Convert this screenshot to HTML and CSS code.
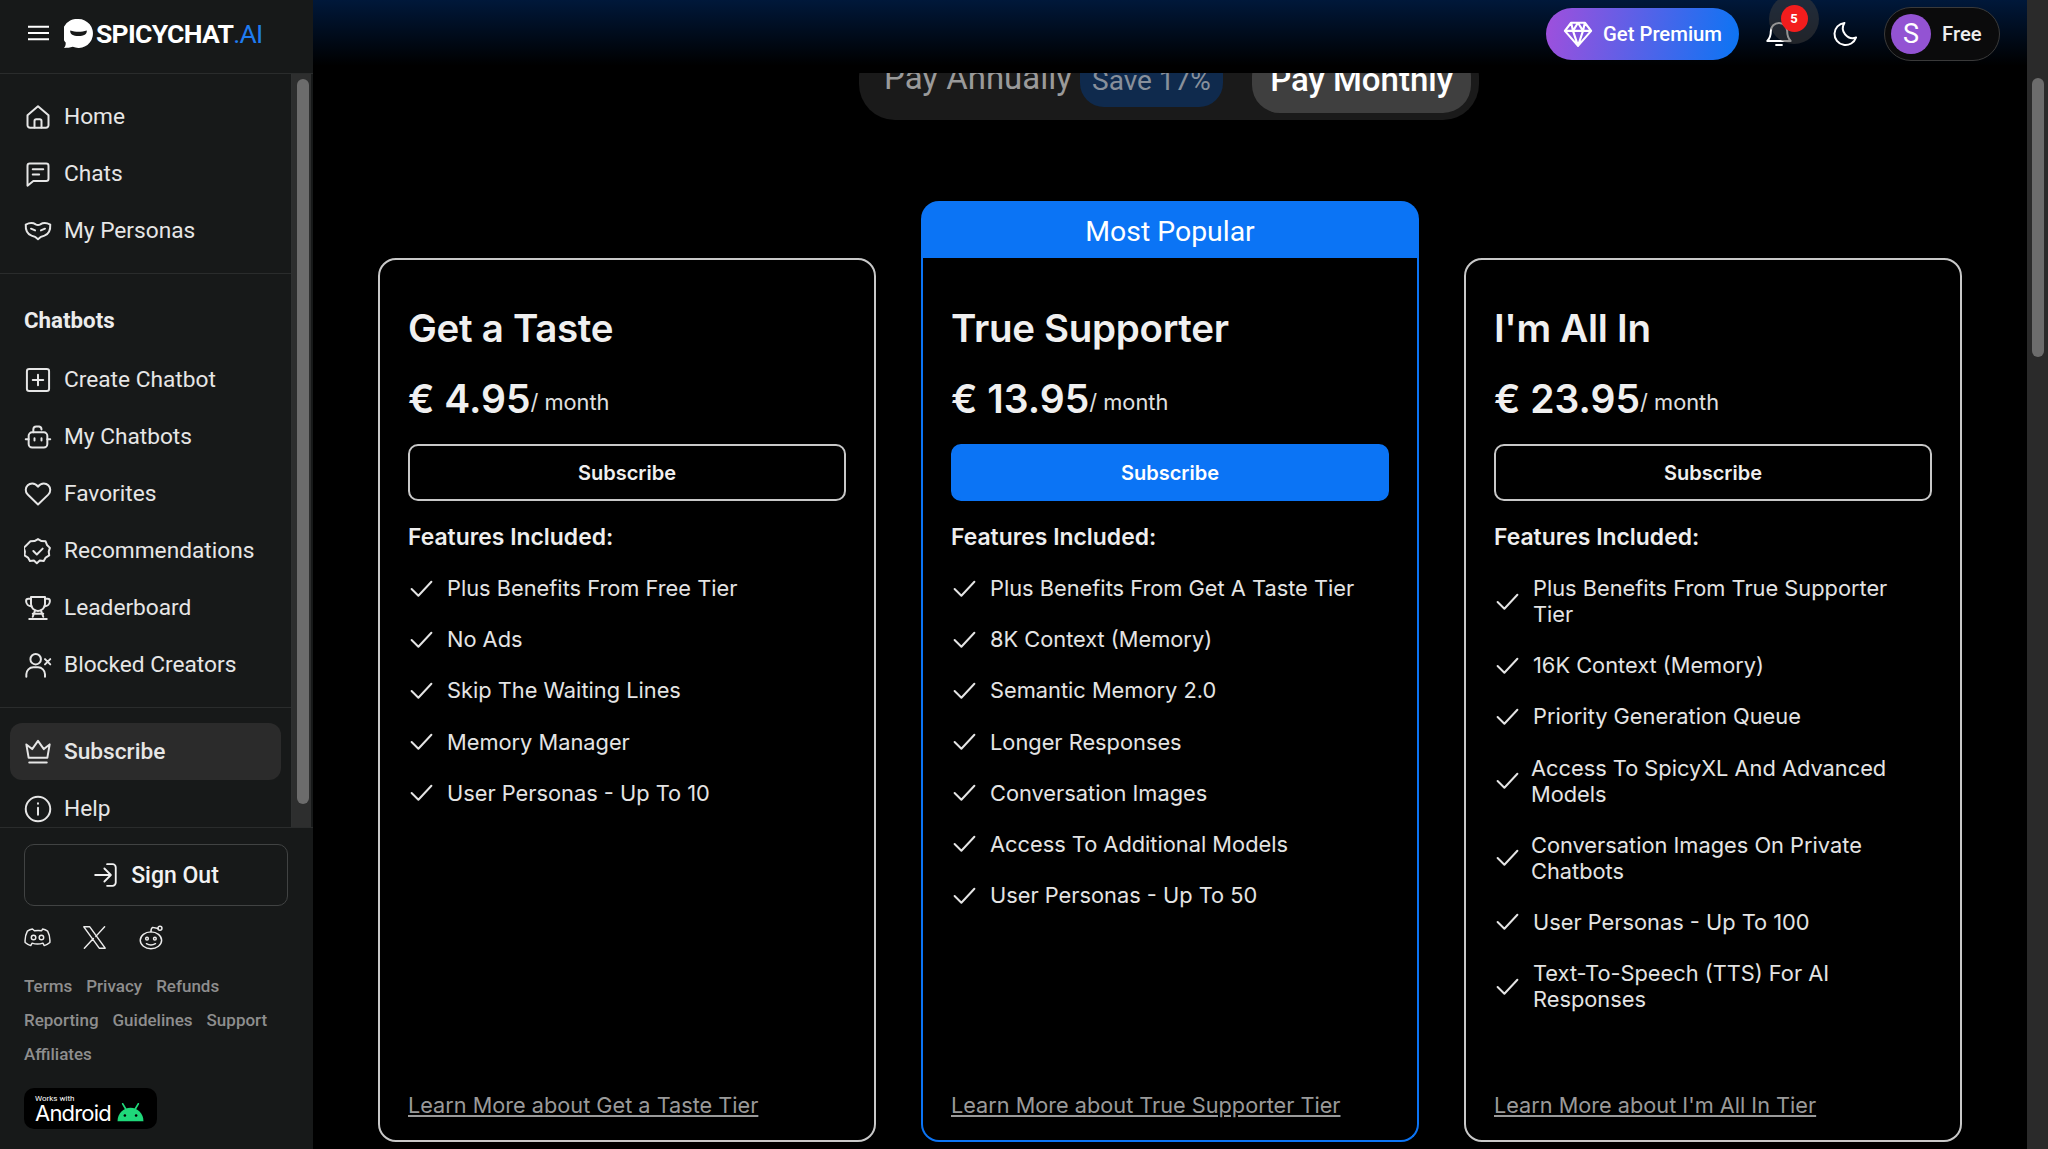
FILE: index.html
```html
<!DOCTYPE html>
<html>
<head>
	<meta charset="utf-8">
	<title>SpicyChat.AI - Subscribe</title>
	<link rel="stylesheet" href="styles.css">
</head>

<body>
	<svg class="sprite" xmlns="http://www.w3.org/2000/svg">
		<symbol id="i-home" viewBox="0 0 24 24"><path d="M3 10.500 12 2.800l9 7.700V19a2.200 2.200 0 0 1-2.200 2.200H5.200A2.200 2.200 0 0 1 3 19z"/><path d="M9 21v-5.500a1.500 1.500 0 0 1 1.500-1.500h3a1.500 1.500 0 0 1 1.500 1.500V21"/></symbol>
		<symbol id="i-chat" viewBox="0 0 24 24"><path d="M3 5a2 2 0 0 1 2-2h14a2 2 0 0 1 2 2v11a2 2 0 0 1-2 2H8l-5 4z"/><path d="M7.500 8h9M7.500 12.500h5.500"/></symbol>
		<symbol id="i-mask" viewBox="0 0 24 24"><path d="M1.500 6.500c3.500-1.800 6.500-1.500 8.500-.2 1.200.7 2.800.7 4 0 2-1.300 5-1.600 8.500.2.300 5-1 8-5 9.500-1.500.5-2.500.7-3.200 1.200L12 19l-2.300-1.800c-.7-.5-1.700-.7-3.200-1.200-4-1.500-5.300-4.500-5-9.500z"/><path d="M6 10l3.500 1.500M18 10l-3.500 1.500"/></symbol>
		<symbol id="i-plus" viewBox="0 0 24 24"><rect x="2.500" y="2.500" width="19" height="19" rx="2"/><path d="M12 7.500v9M7.500 12h9"/></symbol>
		<symbol id="i-bot" viewBox="0 0 24 24"><rect x="4" y="8" width="16" height="13" rx="3"/><path d="M8 8V5.500A2.500 2.500 0 0 1 10.500 3H13a2.500 2.500 0 0 1 2 2.500M1.500 14H4M20 14h2.500M9 13v2M15 13v2"/></symbol>
		<symbol id="i-heart" viewBox="0 0 24 24"><path d="M12 21 3.200 12.500A5.800 5.800 0 0 1 1.500 8.300 5.600 5.600 0 0 1 7 3c2 0 3.800 1 5 2.800C13.200 4 15 3 17 3a5.600 5.600 0 0 1 5.500 5.300 5.800 5.800 0 0 1-1.700 4.200z"/></symbol>
		<symbol id="i-badge" viewBox="0 0 24 24"><path d="M12 1.800l3 1.700 3.500.2 1.200 3.100 2.500 2.500-1 3.200.4 3.300-3 1.800-1.700 3-3.400-.4-2.500 2.200-2.500-2.200-3.400.4-1.700-3-3-1.800.4-3.300-1-3.200 2.500-2.500L5.500 3.700 9 3.500z"/><path d="M8 12l3 3 5-5"/></symbol>
		<symbol id="i-trophy" viewBox="0 0 24 24"><path d="M6 2.500h12v6a6 6 0 0 1-12 0z"/><path d="M6 4H3.800a2 2 0 0 0-2 2c0 2.500 2 4.500 4.700 4.500M18 4h2.200a2 2 0 0 1 2 2c0 2.500-2 4.500-4.700 4.500M9.500 14l-2 5.500M14.500 14l2 5.500M7.500 17h9M4.500 21.500h15"/></symbol>
		<symbol id="i-userx" viewBox="0 0 24 24"><circle cx="10" cy="7" r="4.500"/><path d="M2 22v-2a6 6 0 0 1 6-6h4a6 6 0 0 1 6 6v2M18 7l4.500 4.500M22.500 7 18 11.500"/></symbol>
		<symbol id="i-crown" viewBox="0 0 24 24"><path d="M2 5.500l5 4 5-7 5 7 5-4-2 11.500H4zM4.500 21h15"/></symbol>
		<symbol id="i-info" viewBox="0 0 24 24"><circle cx="12" cy="12" r="10.500"/><path d="M12 11v6M12 7v.6"/></symbol>
		<symbol id="i-signin" viewBox="0 0 24 24"><path d="M13 2h5a3 3 0 0 1 3 3v14a3 3 0 0 1-3 3h-5M2 12h14M10.500 6l6 6-6 6"/></symbol>
		<symbol id="i-discord" viewBox="0 0 24 24"><path d="M7.500 4.500c-2 .3-3.300 1-4.500 1.800C1.300 9.500.7 13 1 16.500c1.500 1.300 3 2.200 5 2.700l1.200-2.200c3 1 6.600 1 9.600 0l1.200 2.200c2-.5 3.500-1.400 5-2.700.3-3.500-.3-7-2-10.200-1.200-.8-2.500-1.500-4.500-1.800l-.8 1.500c-2.200-.3-4.200-.3-6.400 0z"/><circle cx="8.500" cy="12" r="2"/><circle cx="15.500" cy="12" r="2"/></symbol>
		<symbol id="i-x" viewBox="0 0 24 24"><path d="M2.500 2.500h5.300l13.700 19h-5.300zM21 2.500l-7.800 8.500M3 21.500l8-8.600"/></symbol>
		<symbol id="i-reddit" viewBox="0 0 24 24"><ellipse cx="11.500" cy="14.500" rx="9.500" ry="7.500"/><path d="M11.500 7c0-2 .5-3.500 1.500-4l5 1"/><circle cx="19.500" cy="3.800" r="1.800"/><circle cx="8" cy="13" r="1.200"/><circle cx="15" cy="13" r="1.200"/><path d="M7.500 17.500c2.500 1.500 5.500 1.500 8 0"/></symbol>
		<symbol id="i-check" viewBox="0 0 24 24"><path d="M2.500 12.500 9 19 21.500 5.500"/></symbol>
		<symbol id="i-diamond" viewBox="0 0 24 24"><path d="M6.500 3h11L22.500 9.500 12 21.500 1.500 9.500zM1.500 9.500h21M8 9.500 12 21.500l4-12M6.500 3 8 9.500 12 3l4 6.500L17.500 3"/></symbol>
		<symbol id="i-bell" viewBox="0 0 24 24"><path d="M12 2.500a7 7 0 0 0-7 7c0 5-1 6.500-3 8.500h20c-2-2-3-3.500-3-8.500a7 7 0 0 0-7-7zM9.500 21.500h5"/></symbol>
		<symbol id="i-moon" viewBox="0 0 24 24"><path d="M11.500 2.500a9.500 9.500 0 1 0 10 12.500 8.500 8.500 0 0 1-10-12.500z"/></symbol>
	</svg>

	<aside class="sidebar">
		<div class="brand">
			<svg class="burger" viewBox="0 0 22 16"><path d="M0 1.500h22M0 8h22M0 14.500h22"/></svg>
			<svg class="logo-mark" viewBox="0 0 28 28"><path d="M14 0a14 14 0 1 1-5.500 26.900C6 27.800 3 28 0 28c1.200-1.400 1.800-3 1.600-5.200A14 14 0 0 1 14 0z" fill="#fff"/><path d="M6 11c5 1.800 11 1.800 16 0 .4 3.500-3 5.500-8 5.500S5.600 14.500 6 11z" fill="#171919"/></svg>
			<span class="logo-text">SPICYCHAT<span class="logo-ai">.AI</span></span>
		</div>

		<div class="side-scroll">
			<nav class="side-nav">
				<div class="side-group">
					<a class="side-link"><svg class="icon"><use href="#i-home"/></svg>Home</a>
					<a class="side-link"><svg class="icon"><use href="#i-chat"/></svg>Chats</a>
					<a class="side-link"><svg class="icon"><use href="#i-mask"/></svg>My Personas</a>
				</div>
				<div class="side-group">
					<h4 class="side-title">Chatbots</h4>
					<a class="side-link"><svg class="icon"><use href="#i-plus"/></svg>Create Chatbot</a>
					<a class="side-link"><svg class="icon"><use href="#i-bot"/></svg>My Chatbots</a>
					<a class="side-link"><svg class="icon"><use href="#i-heart"/></svg>Favorites</a>
					<a class="side-link"><svg class="icon"><use href="#i-badge"/></svg>Recommendations</a>
					<a class="side-link"><svg class="icon"><use href="#i-trophy"/></svg>Leaderboard</a>
					<a class="side-link"><svg class="icon"><use href="#i-userx"/></svg>Blocked Creators</a>
				</div>
				<div class="side-group last">
					<a class="side-link active"><svg class="icon"><use href="#i-crown"/></svg>Subscribe</a>
					<a class="side-link"><svg class="icon"><use href="#i-info"/></svg>Help</a>
				</div>
			</nav>
			<div class="side-track"><div class="side-thumb"></div></div>
		</div>

		<div class="side-foot">
			<button class="signout"><svg class="icon"><use href="#i-signin"/></svg>Sign Out</button>
			<div class="socials">
				<svg class="icon thin"><use href="#i-discord"/></svg>
				<svg class="icon thin"><use href="#i-x"/></svg>
				<svg class="icon thin"><use href="#i-reddit"/></svg>
			</div>
			<div class="foot-links">
				<a>Terms</a><a>Privacy</a><a>Refunds</a>
				<a>Reporting</a><a>Guidelines</a><a>Support</a>
				<a>Affiliates</a>
			</div>
			<div class="android">
				<div class="android-text">
					<span class="works">Works with</span>
					<span class="android-name">Android</span>
				</div>
				<svg class="android-head" viewBox="0 0 32 22"><path d="M7 1l3.500 6M25 1l-3.500 6" stroke="#1fd87a" stroke-width="2" stroke-linecap="round"/><path d="M1 21C1 12 8 5.500 16 5.500S31 12 31 21z" fill="#1fd87a"/><circle cx="9.500" cy="14.500" r="1.500" fill="#000"/><circle cx="22.500" cy="14.500" r="1.500" fill="#000"/></svg>
			</div>
		</div>
	</aside>

	<main class="main">
		<header class="topbar">
			<button class="premium"><svg class="icon"><use href="#i-diamond"/></svg>Get Premium</button>
			<div class="bell">
				<svg class="icon"><use href="#i-bell"/></svg>
				<span class="halo"><span class="badge">5</span></span>
			</div>
			<svg class="icon moon"><use href="#i-moon"/></svg>
			<div class="account"><span class="avatar">S</span>Free</div>
		</header>

		<div class="billing">
			<div class="billing-pill">
				<span class="bill-opt">Pay Annually</span>
				<span class="save">Save 17%</span>
				<span class="bill-opt current">Pay Monthly</span>
			</div>
		</div>

		<section class="plans">
			<article class="plan">
				<h2 class="plan-name">Get a Taste</h2>
				<p class="plan-price"><b>€ 4.95</b>/ month</p>
				<button class="plan-btn">Subscribe</button>
				<h3 class="plan-sub">Features Included:</h3>
				<ul class="feats">
					<li><svg class="icon"><use href="#i-check"/></svg>Plus Benefits From Free Tier</li>
					<li><svg class="icon"><use href="#i-check"/></svg>No Ads</li>
					<li><svg class="icon"><use href="#i-check"/></svg>Skip The Waiting Lines</li>
					<li><svg class="icon"><use href="#i-check"/></svg>Memory Manager</li>
					<li><svg class="icon"><use href="#i-check"/></svg>User Personas - Up To 10</li>
				</ul>
				<a class="plan-more">Learn More about Get a Taste Tier</a>
			</article>

			<article class="plan popular">
				<div class="popular-tag">Most Popular</div>
				<h2 class="plan-name">True Supporter</h2>
				<p class="plan-price"><b>€ 13.95</b>/ month</p>
				<button class="plan-btn">Subscribe</button>
				<h3 class="plan-sub">Features Included:</h3>
				<ul class="feats">
					<li><svg class="icon"><use href="#i-check"/></svg>Plus Benefits From Get A Taste Tier</li>
					<li><svg class="icon"><use href="#i-check"/></svg>8K Context (Memory)</li>
					<li><svg class="icon"><use href="#i-check"/></svg>Semantic Memory 2.0</li>
					<li><svg class="icon"><use href="#i-check"/></svg>Longer Responses</li>
					<li><svg class="icon"><use href="#i-check"/></svg>Conversation Images</li>
					<li><svg class="icon"><use href="#i-check"/></svg>Access To Additional Models</li>
					<li><svg class="icon"><use href="#i-check"/></svg>User Personas - Up To 50</li>
				</ul>
				<a class="plan-more">Learn More about True Supporter Tier</a>
			</article>

			<article class="plan">
				<h2 class="plan-name">I'm All In</h2>
				<p class="plan-price"><b>€ 23.95</b>/ month</p>
				<button class="plan-btn">Subscribe</button>
				<h3 class="plan-sub">Features Included:</h3>
				<ul class="feats">
					<li><svg class="icon"><use href="#i-check"/></svg>Plus Benefits From True Supporter Tier</li>
					<li><svg class="icon"><use href="#i-check"/></svg>16K Context (Memory)</li>
					<li><svg class="icon"><use href="#i-check"/></svg>Priority Generation Queue</li>
					<li class="tight"><svg class="icon"><use href="#i-check"/></svg>Access To SpicyXL And Advanced Models</li>
					<li class="tight"><svg class="icon"><use href="#i-check"/></svg>Conversation Images On Private Chatbots</li>
					<li><svg class="icon"><use href="#i-check"/></svg>User Personas - Up To 100</li>
					<li><svg class="icon"><use href="#i-check"/></svg>Text-To-Speech (TTS) For AI Responses</li>
				</ul>
				<a class="plan-more">Learn More about I'm All In Tier</a>
			</article>
		</section>
	</main>

	<div class="page-track"><div class="page-thumb"></div></div>
</body>
</html>
```

FILE: styles.css
```css
*{
	box-sizing: border-box;
}
html, body{
	height: 100%;
}
body{
	margin: 0;
	display: flex;
	height: 1149px;
	overflow: hidden;
	background-color: #000;
	color: #ececec;
	font-family: "Inter", "Liberation Sans", sans-serif;
}
h2, h3, h4, p, ul{
	margin: 0;
	padding: 0;
}
button{
	font-family: inherit;
	cursor: pointer;
}
.sprite{
	width: 0;
	height: 0;
	position: absolute;
}
.icon{
	fill: none;
	stroke: currentColor;
	stroke-width: 1.7;
	stroke-linecap: round;
	stroke-linejoin: round;
	flex-shrink: 0;
}

/* sidebar */
.sidebar{
	width: 313px;
	flex-shrink: 0;
	height: 100%;
	display: flex;
	flex-direction: column;
	background-color: #171919;
	font-family: "Roboto", "Liberation Sans", sans-serif;
}
.brand{
	height: 74px;
	flex-shrink: 0;
	display: flex;
	align-items: center;
	padding: 0 0 7px 28px;
	border-bottom: 1px solid #2a2c2c;
}
.burger{
	width: 21px;
	height: 16px;
	fill: none;
	stroke: #fff;
	stroke-width: 2.2;
	margin-right: 15px;
}
.logo-mark{
	width: 29px;
	height: 29px;
	margin-right: 3px;
}
.logo-text{
	font-size: 26.5px;
	font-weight: 700;
	letter-spacing: -0.7px;
	color: #fff;
}
.logo-ai{
	font-weight: 400;
	color: #1f7cf0;
}
.side-scroll{
	height: 754px;
	flex-shrink: 0;
	display: flex;
	border-bottom: 1px solid #2a2c2c;
	overflow: hidden;
}
.side-nav{
	width: 292px;
	flex-shrink: 0;
	border-right: 1px solid #2e3030;
}
.side-group{
	padding: 14px 0 14px;
	border-bottom: 1px solid #2a2c2c;
}
.side-group.last{
	border-bottom: 0;
	padding-top: 15px;
}
.side-title{
	font-size: 22.300px;
	font-weight: 700;
	color: #ececec;
	padding: 19px 24px 17px;
	line-height: 27px;
}
.side-link{
	display: flex;
	align-items: center;
	height: 57px;
	margin: 0 10px;
	padding-left: 14px;
	gap: 12px;
	font-size: 22.700px;
	color: #e6e6e6;
	border-radius: 12px;
}
.side-link .icon{
	width: 28px;
	height: 28px;
}
.side-link.active{
	background-color: #2b2b2b;
	font-weight: 500;
}
.side-track{
	width: 19px;
	background-color: #2d2e2e;
	padding: 5px 2px 0 5px;
}
.side-thumb{
	height: 725px;
	background-color: #6c6c6c;
	border-radius: 6px;
}
.side-foot{
	flex: 1;
	padding: 16px 24px 0;
}
.signout{
	width: 264px;
	height: 62px;
	display: flex;
	align-items: center;
	justify-content: center;
	gap: 12px;
	background-color: transparent;
	border: 1px solid #414343;
	border-radius: 10px;
	color: #f2f2f2;
	font-size: 23px;
	font-weight: 500;
}
.signout .icon{
	width: 26px;
	height: 26px;
}
.socials{
	display: flex;
	gap: 30px;
	margin-top: 18px;
	color: #ececec;
}
.socials .icon{
	width: 27px;
	height: 27px;
	stroke-width: 1.3;
}
.foot-links{
	display: flex;
	flex-wrap: wrap;
	column-gap: 14px;
	margin-top: 18px;
	width: 270px;
	font-size: 17px;
	font-weight: 500;
	line-height: 34px;
	color: #8e8e8e;
}
.android{
	width: 133px;
	height: 41px;
	margin-top: 17px;
	display: flex;
	align-items: flex-end;
	gap: 4px;
	padding: 0 10px 6px 11px;
	background-color: #000;
	border-radius: 10px;
	color: #fff;
}
.android-text{
	display: flex;
	flex-direction: column;
}
.works{
	font-size: 8px;
	line-height: 9px;
}
.android-name{
	font-family: "Inter", sans-serif;
	font-size: 22px;
	line-height: 20px;
	letter-spacing: -0.8px;
}
.android-head{
	width: 31px;
	height: 19px;
	margin-bottom: 1px;
}

/* main column */
.main{
	flex: 1;
	position: relative;
	min-width: 0;
	padding-top: 40px;
}
.topbar{
	position: absolute;
	top: 0;
	left: 0;
	right: 0;
	z-index: 2;
	height: 73px;
	display: flex;
	align-items: center;
	justify-content: flex-end;
	padding: 0 27px 6px 0;
	background: linear-gradient(to bottom, #00183a, #000 90%);
}
.premium{
	width: 193px;
	height: 52px;
	display: flex;
	align-items: center;
	justify-content: center;
	gap: 10px;
	border: 0;
	border-radius: 26px;
	background: linear-gradient(100deg, #a04fdc, #0a75f4);
	color: #fff;
	font-family: "Roboto", sans-serif;
	font-size: 20.300px;
	font-weight: 500;
}
.premium .icon{
	width: 30px;
	height: 30px;
}
.bell{
	position: relative;
	width: 28px;
	height: 28px;
	margin-left: 26px;
	color: #fff;
}
.bell .icon{
	width: 28px;
	height: 28px;
}
.halo{
	position: absolute;
	top: -26px;
	left: 4px;
	width: 50px;
	height: 50px;
	border-radius: 50%;
	background-color: rgba(60,60,60,0.55);
	display: flex;
	align-items: center;
	justify-content: center;
}
.badge{
	width: 27px;
	height: 27px;
	border-radius: 50%;
	background-color: #f31d1d;
	color: #fff;
	font-family: "Roboto", sans-serif;
	font-size: 13px;
	font-weight: 700;
	text-align: center;
	line-height: 27px;
}
.moon{
	width: 28px;
	height: 28px;
	margin-left: 38px;
	color: #fff;
}
.account{
	width: 116px;
	height: 54px;
	margin-left: 25px;
	display: flex;
	align-items: center;
	gap: 11px;
	padding-left: 6px;
	border: 1px solid #3a3a3a;
	border-radius: 27px;
	background-color: #0b0b0c;
	font-family: "Roboto", sans-serif;
	font-size: 20.300px;
	font-weight: 500;
	color: #eee;
}
.avatar{
	width: 40px;
	height: 40px;
	border-radius: 50%;
	background-color: #9353d3;
	color: #fff;
	font-size: 27px;
	font-weight: 400;
	text-align: center;
	line-height: 40px;
}

/* monthly / annual switch */
.billing{
	display: flex;
	justify-content: center;
}
.billing-pill{
	display: flex;
	align-items: flex-end;
	height: 80px;
	width: 620px;
	margin-left: -2px;
	padding: 0 8px 7px 25px;
	background-color: #1a1a1a;
	border-radius: 36px;
	font-family: "Roboto", sans-serif;
	font-size: 33px;
}
.bill-opt{
	color: #9a9a9a;
	line-height: 46px;
	padding-bottom: 12px;
}
.save{
	width: 143px;
	margin: 0 0 6px 8px;
	height: 60px;
	line-height: 68px;
	text-align: center;
	background-color: #0f2a4d;
	border-radius: 24px;
	font-size: 28px;
	color: #88909b;
}
.bill-opt.current{
	width: 219px;
	margin-left: auto;
	height: 65px;
	padding: 9px 0 0;
	text-align: center;
	color: #fff;
	background-color: #3f3f3f;
	border-radius: 28px;
	font-weight: 500;
}

/* plans */
.plans{
	display: grid;
	grid-template-columns: repeat(3, 498px);
	column-gap: 45px;
	margin: 138px 0 0 65px;
}
.plan{
	position: relative;
	height: 884px;
	display: flex;
	flex-direction: column;
	padding: 45px 28px 21px;
	border: 2px solid #c8c8c8;
	border-radius: 18px;
	background-color: #000;
}
.plan.popular{
	border: 2px solid #0b74f5;
	border-top: 0;
	border-radius: 0 0 18px 18px;
	padding-top: 47px;
}
.popular-tag{
	position: absolute;
	top: -57px;
	left: -2px;
	right: -2px;
	height: 57px;
	background-color: #0b74f5;
	border-radius: 18px 18px 0 0;
	font-family: "Roboto", sans-serif;
	font-size: 28.400px;
	line-height: 62px;
	text-align: center;
	color: #fff;
}
.plan-name{
	font-size: 38.500px;
	font-weight: 600;
	line-height: 46px;
	letter-spacing: -0.3px;
	color: #f0f0f0;
}
.plan-price{
	height: 48px;
	margin-top: 24px;
	font-size: 21.800px;
	line-height: 48px;
	color: #e0e0e0;
}
.plan-price b{
	font-size: 39px;
	font-weight: 600;
	color: #f0f0f0;
	vertical-align: -3px;
}
.plan-btn{
	width: 100%;
	height: 57px;
	margin-top: 21px;
	flex-shrink: 0;
	background-color: transparent;
	border: 2px solid #c8c8c8;
	border-radius: 10px;
	color: #f0f0f0;
	font-size: 20px;
	font-weight: 600;
}
.popular .plan-btn{
	background-color: #0b74f5;
	border-color: #0b74f5;
	color: #fff;
}
.plan-sub{
	margin-top: 22px;
	font-size: 22.900px;
	font-weight: 600;
	line-height: 28px;
	color: #eee;
}
.feats{
	list-style: none;
	margin-top: 24px;
	display: flex;
	flex-direction: column;
	gap: 25.200px;
}
.feats li{
	display: flex;
	align-items: center;
	gap: 13px;
	font-size: 21.800px;
	line-height: 26px;
	color: #e4e4e4;
}
.feats .icon{
	width: 25px;
	height: 25px;
	margin-left: 1px;
	stroke-width: 1.9;
}
.feats li.tight{
	gap: 11px;
}
.plan-more{
	margin-top: auto;
	font-size: 21.700px;
	line-height: 28px;
	color: #9a9a9a;
	text-decoration: underline;
}
.page-track{
	width: 21px;
	flex-shrink: 0;
	background-color: #2a2a2a;
	padding: 78px 4px 0 5px;
}
.page-thumb{
	height: 279px;
	background-color: #6c6c6c;
	border-radius: 6px;
}
```
